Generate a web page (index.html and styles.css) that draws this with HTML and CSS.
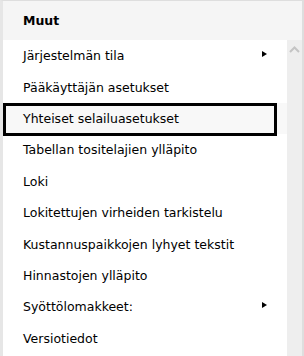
FILE: index.html
```html
<!DOCTYPE html>
<html lang="fi">
<head>
    <meta charset="UTF-8">
    <meta name="viewport" content="width=device-width, initial-scale=1.0">
    <title>Muut</title>
    <link rel="stylesheet" href="styles.css">
</head>
<body>
    <div class="panel">
        <div class="panel-header">Muut</div>
        <div class="panel-body">
            <ul class="menu">
                <li class="menu-item has-sub">Järjestelmän tila</li>
                <li class="menu-item">Pääkäyttäjän asetukset</li>
                <li class="menu-item focused">Yhteiset selailuasetukset</li>
                <li class="menu-item">Tabellan tositelajien ylläpito</li>
                <li class="menu-item">Loki</li>
                <li class="menu-item">Lokitettujen virheiden tarkistelu</li>
                <li class="menu-item">Kustannuspaikkojen lyhyet tekstit</li>
                <li class="menu-item">Hinnastojen ylläpito</li>
                <li class="menu-item has-sub">Syöttölomakkeet:</li>
                <li class="menu-item">Versiotiedot</li>
            </ul>
            <div class="scrollbar">
                <svg class="scroll-up" width="11" height="7" viewBox="0 0 11 7">
                    <polyline points="1 6 5.5 1.5 10 6" fill="none" stroke="#c4c4c4" stroke-width="2"></polyline>
                </svg>
            </div>
        </div>
    </div>
</body>
</html>
```

FILE: styles.css
```css
body {
  margin: 0;
  padding: 0;
  font-family: 'DejaVu Sans', Verdana, sans-serif;
  font-size: 12.5px;
  color: #000;
  background: #fff;
}

.panel {
  width: 304px;
  height: 356px;
  box-sizing: border-box;
  border-left: 3px solid #e6e6e6;
  border-right: 2px solid #dedede;
  border-top: 1px solid #dedede;
  display: flex;
  flex-direction: column;
  overflow: hidden;
}

.panel-header {
  height: 39px;
  flex: none;
  background: #f5f5f5;
  font-weight: bold;
  display: flex;
  align-items: center;
  padding-left: 20px;
}

.panel-body {
  flex: 1;
  display: flex;
  min-height: 0;
}

.menu {
  list-style: none;
  margin: 0;
  padding: 0;
  flex: 1;
}

.menu-item {
  position: relative;
  height: 31.4px;
  box-sizing: border-box;
  display: flex;
  align-items: center;
  padding-left: 20px;
  white-space: nowrap;
}

/* submenu arrow */
.menu-item.has-sub::after {
  content: '';
  position: absolute;
  right: 20px;
  top: 50%;
  margin-top: -5px;
  border-left: 5px solid #000;
  border-top: 3px solid transparent;
  border-bottom: 3px solid transparent;
}

.menu-item.focused {
  background: #f8f8f8;
}

.menu-item.focused::before {
  content: '';
  position: absolute;
  left: 0;
  top: 0;
  bottom: -2px;
  width: 274px;
  border: 3px solid #000;
  box-sizing: border-box;
}

.scrollbar {
  width: 15px;
  flex: none;
  background: #eeeeee;
  display: flex;
  justify-content: center;
  padding-top: 6px;
  box-sizing: border-box;
}

.scroll-up {
  display: block;
}
```
